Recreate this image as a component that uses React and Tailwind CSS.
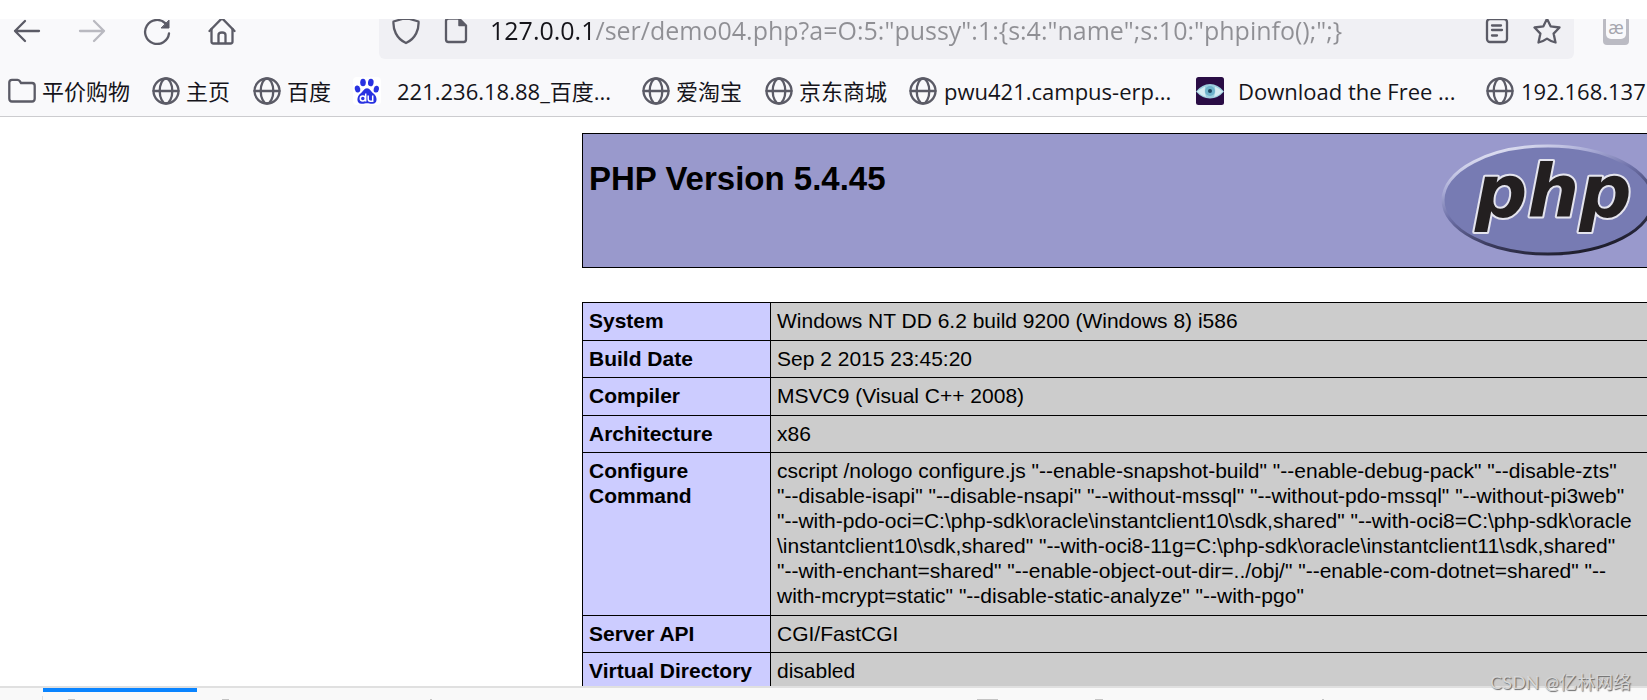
import React from "react";

const stroke = {
  fill: "none",
  stroke: "currentColor",
  strokeWidth: 2.3,
  strokeLinecap: "round",
  strokeLinejoin: "round",
};

function BackIcon() {
  return (
    <svg viewBox="0 0 28 28" className="size-7" {...stroke}>
      <path d="M2 14H26M12 4L2 14L12 24" />
    </svg>
  );
}

function ForwardIcon() {
  return (
    <svg viewBox="0 0 28 28" className="size-7" {...stroke}>
      <path d="M2 14H26M16 4L26 14L16 24" />
    </svg>
  );
}

function ReloadIcon() {
  return (
    <svg viewBox="0 0 28 28" className="size-7" {...stroke}>
      <path d="M26 16.5A12 12 0 1 1 22.5 6.4" />
      <path d="M26 3.5V11H18.5Z" fill="currentColor" strokeWidth="1" />
    </svg>
  );
}

function HomeIcon() {
  return (
    <svg viewBox="0 0 28 28" className="size-7" {...stroke}>
      <path d="M1.5 14L12.6 2.6Q14 1.4 15.4 2.6L26.5 14" />
      <path d="M3.5 12V24.5Q3.5 26.5 5.5 26.5H22.5Q24.5 26.5 24.5 24.5V12" />
      <path d="M10.5 26V18Q10.5 15.5 14 15.5Q17.5 15.5 17.5 18V26" />
    </svg>
  );
}

function ShieldIcon() {
  return (
    <svg viewBox="0 0 28 28" className="size-7" {...stroke}>
      <path d="M14 1L26.5 4.5C27 12 24 21.5 14 26C4 21.5 1 12 1.5 4.5Z" />
    </svg>
  );
}

function PageIcon() {
  return (
    <svg viewBox="0 0 28 28" className="size-7" {...stroke}>
      <path d="M17 1.5H7Q4 1.5 4 4V22.5Q4 25 6.5 25H21.5Q24 25 24 22.5V8.5Z" />
      <path d="M17 2V8.5H23.5Z" fill="currentColor" strokeWidth="1.5" />
    </svg>
  );
}

function ReaderIcon() {
  return (
    <svg viewBox="0 0 28 28" className="size-7" {...stroke}>
      <rect x="4" y="2" width="20" height="23" rx="3" />
      <path d="M9 8.5H18M9 13H19M9 18.5H14" />
    </svg>
  );
}

function StarIcon() {
  return (
    <svg viewBox="0 0 28 28" className="size-7" {...stroke}>
      <path d="M14 1.8L17.6 9.3L26.5 10.5L20.6 16.6L22.5 25.5Q18 24.5 14 21.6Q10 24.5 5.5 25.5L7.4 16.6L1.5 10.5L10.4 9.3Z" />
    </svg>
  );
}

function FolderIcon() {
  return (
    <svg viewBox="0 0 28 28" className="size-7" {...stroke}>
      <path d="M1.3 5.5Q1.3 2.8 4 2.8H9.5Q10.8 2.8 11.6 3.9L13 6H24Q26.7 6 26.7 8.7V21.5Q26.7 24.5 24 24.5H4Q1.3 24.5 1.3 21.5Z" />
    </svg>
  );
}

function GlobeIcon() {
  return (
    <svg viewBox="0 0 28 28" className="size-7" {...stroke}>
      <circle cx="14" cy="14" r="12.5" />
      <path d="M1.5 14H26.5" />
      <ellipse cx="14" cy="14" rx="6.3" ry="12.5" />
    </svg>
  );
}

function BaiduIcon() {
  return (
    <svg viewBox="0 0 28 28" className="size-7 rounded bg-white">
      <g fill="#2932e1">
        <ellipse cx="4.5" cy="12" rx="2.7" ry="3.5" transform="rotate(-12 4.5 12)" />
        <ellipse cx="10" cy="5.5" rx="2.8" ry="3.8" />
        <ellipse cx="17.8" cy="5.5" rx="2.8" ry="3.8" transform="rotate(8 17.8 5.5)" />
        <ellipse cx="23.3" cy="12.2" rx="2.6" ry="3.4" transform="rotate(12 23.3 12.2)" />
        <path d="M14 11.2C17 11.2 18 14.5 20.5 16.5C24.5 19.5 25 26.5 19.5 26.8C17 26.9 16 26.2 14 26.2C12 26.2 11 26.9 8.5 26.8C3 26.5 3.5 19.5 7.5 16.5C10 14.5 11 11.2 14 11.2Z" />
      </g>
      <g fill="none" stroke="#fff" strokeWidth="1.5">
        <circle cx="9.8" cy="21.5" r="2.5" />
        <path d="M12.7 16.5V24.5M15.2 18.5V22Q15.2 24.2 17.2 24.2H19.7V18.5" />
      </g>
    </svg>
  );
}

function EyeIcon() {
  return (
    <svg viewBox="0 0 28 28" className="size-7">
      <rect width="28" height="28" rx="2.5" fill="#2a0d45" />
      <path d="M0 14.5Q6 7 14 7Q22 7 28 14.5Q22 21.5 14 21.5Q6 21.5 0 14.5Z" fill="#9ccfdf" />
      <path d="M1 14.5Q6 11 9 9.5Q8 15 10 20Q5 18.5 1 14.5Z" fill="#d5edf3" />
      <path d="M27 14.5Q22 11 19 9.5Q20 15 18 20Q23 18.5 27 14.5Z" fill="#d5edf3" />
      <circle cx="14" cy="14" r="5" fill="#6fb4cc" />
      <circle cx="14" cy="14" r="2" fill="#1d4660" />
    </svg>
  );
}

function PhpLogo() {
  return (
    <svg viewBox="0 0 214 112" className="h-28 w-[214px] overflow-visible" role="img" aria-label="PHP logo">
      <defs>
        <linearGradient id="rim" x1="0.25" y1="0" x2="0.8" y2="1">
          <stop offset="0" stopColor="#e6e7f5" />
          <stop offset="0.22" stopColor="#a9abd6" />
          <stop offset="0.42" stopColor="#6d70a8" />
          <stop offset="0.7" stopColor="#3a3a5c" />
          <stop offset="1" stopColor="#17161f" />
        </linearGradient>
      </defs>
      <ellipse cx="107" cy="56" rx="105" ry="54" fill="#777bb3" stroke="url(#rim)" strokeWidth="3" />
      <text
        x="34"
        y="73"
        fontFamily="'DejaVu Sans', sans-serif"
        fontSize="73"
        fontWeight="700"
        fontStyle="italic"
        fill="#231f20"
        stroke="#e4e4ee"
        strokeWidth="4"
        strokeLinejoin="round"
        paintOrder="stroke"
      >
        php
      </text>
    </svg>
  );
}

const bookmarks = [
  { icon: FolderIcon, label: "平价购物", width: "w-36", gap: "gap-[6px]" },
  { icon: GlobeIcon, label: "主页", width: "w-[101px]", gap: "gap-[6px]" },
  { icon: GlobeIcon, label: "百度", width: "w-[100px]", gap: "gap-[6px]" },
  { icon: BaiduIcon, label: "221.236.18.88_百度...", width: "w-[289px]", gap: "gap-4" },
  { icon: GlobeIcon, label: "爱淘宝", width: "w-[123px]", gap: "gap-[6px]" },
  { icon: GlobeIcon, label: "京东商城", width: "w-36", gap: "gap-[6px]" },
  { icon: GlobeIcon, label: "pwu421.campus-erp...", width: "w-[287px]", gap: "gap-[7px]" },
  { icon: EyeIcon, label: "Download the Free ...", width: "w-[290px]", gap: "gap-[14px]" },
  { icon: GlobeIcon, label: "192.168.137", width: "w-44", gap: "gap-[7px]" },
];

const configureCommand = [
  'cscript /nologo configure.js "--enable-snapshot-build" "--enable-debug-pack" "--disable-zts"',
  '"--disable-isapi" "--disable-nsapi" "--without-mssql" "--without-pdo-mssql" "--without-pi3web"',
  '"--with-pdo-oci=C:\\php-sdk\\oracle\\instantclient10\\sdk,shared" "--with-oci8=C:\\php-sdk\\oracle',
  '\\instantclient10\\sdk,shared" "--with-oci8-11g=C:\\php-sdk\\oracle\\instantclient11\\sdk,shared"',
  '"--with-enchant=shared" "--enable-object-out-dir=../obj/" "--enable-com-dotnet=shared" "--',
  'with-mcrypt=static" "--disable-static-analyze" "--with-pgo"',
];

const rows = [
  ["System", ["Windows NT DD 6.2 build 9200 (Windows 8) i586"]],
  ["Build Date", ["Sep 2 2015 23:45:20"]],
  ["Compiler", ["MSVC9 (Visual C++ 2008)"]],
  ["Architecture", ["x86"]],
  ["Configure Command", configureCommand],
  ["Server API", ["CGI/FastCGI"]],
  ["Virtual Directory", ["disabled"]],
];

function Toolbar() {
  return (
    <div className="flex h-10 items-start overflow-hidden text-[#5b5b66]">
      <div className="-mt-[2px] flex h-7 w-[379px] shrink-0 items-center gap-[37px] pl-[13px]">
        <button type="button" aria-label="Back"><BackIcon /></button>
        <button type="button" aria-label="Forward" disabled className="text-[#b9b9c0]"><ForwardIcon /></button>
        <button type="button" aria-label="Reload"><ReloadIcon /></button>
        <button type="button" aria-label="Home"><HomeIcon /></button>
      </div>
      <div className="h-10 min-w-0 flex-1 rounded-b-md bg-[#f0f0f4]">
        <div className="-mt-[2px] flex h-7 items-center px-[13px]">
          <button type="button" aria-label="Tracking protection"><ShieldIcon /></button>
          <button type="button" aria-label="Site information" className="ml-[22px]"><PageIcon /></button>
          <input
            type="text"
            aria-label="Address"
            defaultValue={'127.0.0.1/ser/demo04.php?a=O:5:"pussy":1:{s:4:"name";s:10:"phpinfo();";}'}
            className="ml-5 h-9 min-w-0 flex-1 bg-[linear-gradient(to_right,#15141a_105px,#8f8f94_105px)] bg-clip-text font-['Open_Sans','Noto_Sans_CJK_SC',sans-serif] text-[25px] text-transparent outline-none"
          />
          <button type="button" aria-label="Reader view"><ReaderIcon /></button>
          <button type="button" aria-label="Bookmark this page" className="ml-[22px]"><StarIcon /></button>
        </div>
      </div>
      <div className="-mt-[2px] flex h-7 w-[73px] shrink-0 items-center pl-[29px]">
        <button
          type="button"
          aria-label="Extension"
          className="flex h-7 w-[26px] items-start justify-center rounded bg-[#bbbbc3]"
        >
          <span className="flex h-[22px] w-5 items-center justify-center rounded-b-[5px] bg-[#f9f9fb] pb-[2px] font-['Open_Sans',sans-serif] text-[18px] leading-none text-[#a5a5ad]">
            æ
          </span>
        </button>
      </div>
    </div>
  );
}

function Bookmarks() {
  return (
    <nav aria-label="Bookmarks" className="flex h-[57px] items-center overflow-hidden pt-[6px] pl-2">
      {bookmarks.map(({ icon: Icon, label, width, gap }) => (
        <a
          key={label}
          href="#"
          className={`flex shrink-0 items-center whitespace-nowrap font-['Open_Sans','Noto_Sans_CJK_SC',sans-serif] text-[22px] leading-7 text-[#15141a] ${width} ${gap}`}
        >
          <span className="shrink-0 text-[#5b5b66]"><Icon /></span>
          {label}
        </a>
      ))}
    </nav>
  );
}

export default function App() {
  return (
    <div className="relative flex h-screen flex-col overflow-hidden bg-white pt-[19px]">
      <header className="shrink-0 border-b border-[#cccccf] bg-[#f9f9fb]">
        <Toolbar />
        <Bookmarks />
      </header>

      <main className="-mr-5 min-h-0 flex-1 overflow-hidden pt-4 pl-[582px] font-['Liberation_Sans',Arial,sans-serif] text-black">
        <div className="flex h-[135px] items-start justify-between border border-black bg-[#9999cc] pr-[11px] pl-[6px]">
          <h1 className="pt-[25px] text-[33px] leading-10 font-bold">PHP Version 5.4.45</h1>
          <a href="#" className="pt-[10px]"><PhpLogo /></a>
        </div>

        <table className="mt-[34px] w-full table-fixed border-collapse text-[21px] leading-[25px]">
          <tbody>
            {rows.map(([name, lines]) => (
              <tr key={name} className="group align-top">
                <th scope="row" className="w-[188px] border border-black bg-[#ccccff] pt-[5px] pr-1 pl-[6px] text-left font-bold group-odd:pb-[7px] group-even:pb-[6px]">
                  {name}
                </th>
                <td className="border border-black bg-[#cccccc] px-[6px] pt-[5px] group-odd:pb-[7px] group-even:pb-[6px]">
                  {lines.map((line) => (
                    <div key={line} className="whitespace-nowrap">{line}</div>
                  ))}
                </td>
              </tr>
            ))}
          </tbody>
        </table>
      </main>

      <footer className="flex h-[14px] shrink-0 flex-col justify-between border-t-2 border-[#e0e0e0] bg-[#f9f9f9] pl-[42px]">
        <div className="ml-px h-1 w-[154px] bg-[#0a84ff]" />
        <svg viewBox="0 0 1290 4" className="h-1 w-[1290px]" aria-hidden="true">
          <path d="M0.5 0V4" stroke="#dedede" />
          <path d="M26 3.5H33M180 3.5H187M388 3.5H390M935 3.5H956M1053 3.5H1061M1280 3.5H1282" stroke="#c4c4c4" />
        </svg>
      </footer>

      <p className="absolute right-4 bottom-[6px] font-[Lato,'Noto_Sans_CJK_SC',sans-serif] text-[18px] leading-6 text-[#d6d6d6] [text-shadow:1px_1px_1px_#666]">
        CSDN @亿林网络
      </p>
    </div>
  );
}
